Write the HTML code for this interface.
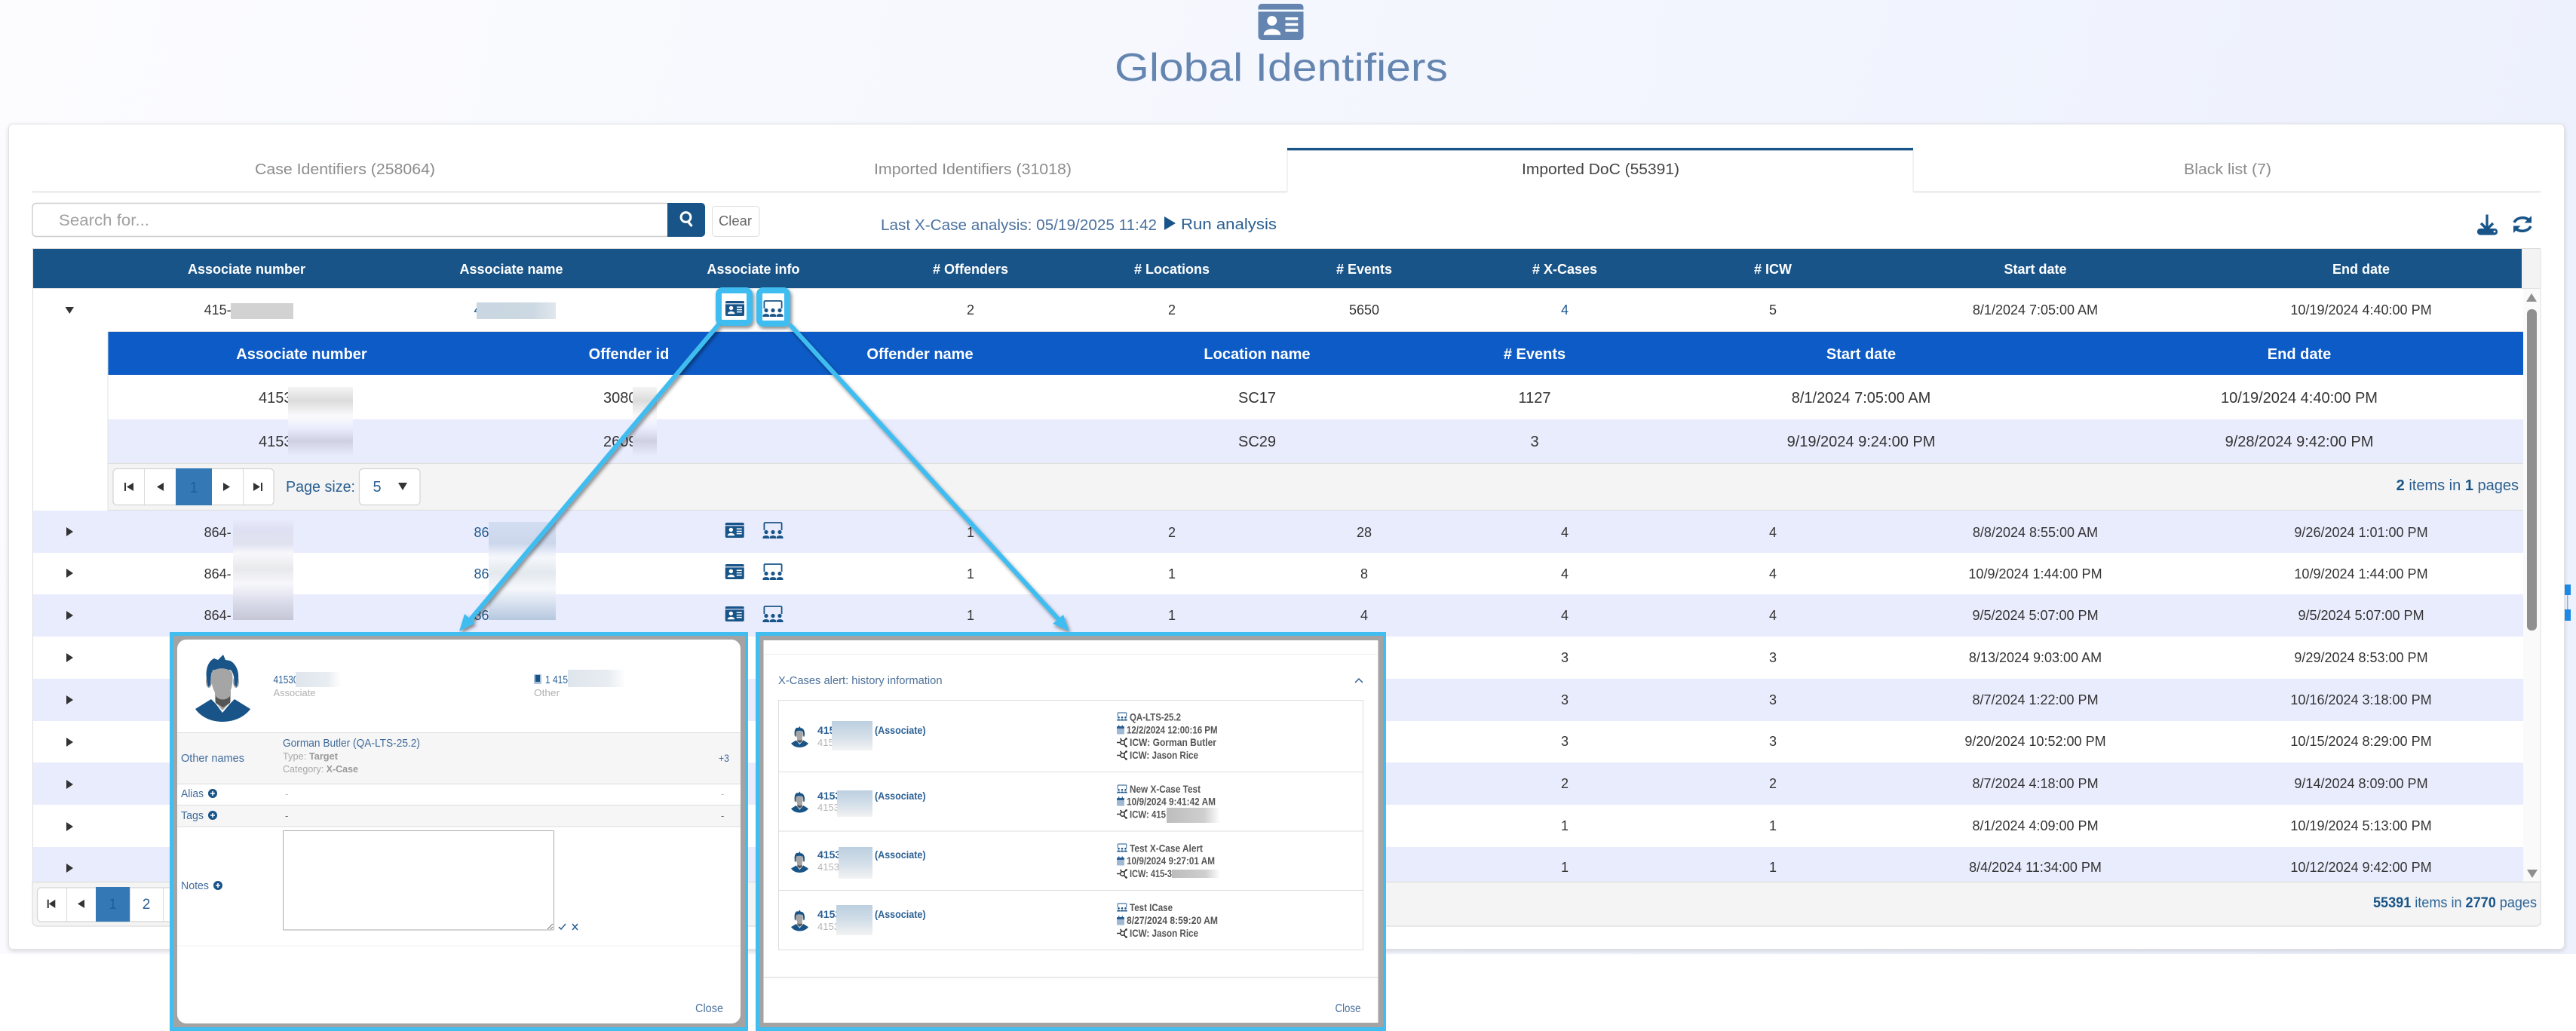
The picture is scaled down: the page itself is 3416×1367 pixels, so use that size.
<!DOCTYPE html>
<html lang="en">
<head>
<meta charset="utf-8">
<title>Global Identifiers</title>
<style>
html,body{margin:0;padding:0;background:#fff;width:3416px;height:1367px;overflow:hidden}
svg{display:block;font-family:"Liberation Sans",sans-serif}
.h{font-size:18px;font-weight:700;fill:#fff;text-anchor:middle}
.nh{font-size:20px;font-weight:700;fill:#fff;text-anchor:middle}
.d{font-size:18px;fill:#333;text-anchor:middle}
.n{font-size:20px;fill:#333;text-anchor:middle}
.l{font-size:18px;fill:#333}
.a{font-size:18px;fill:#1f5a90}
.tab{font-size:20px;fill:#8c8c8c}
.pb{font-size:15px;fill:#3f6a9a}
.ps{font-size:13px;fill:#a8a8a8}
.rt{font-size:13.5px;font-weight:700;fill:#555}
.nm{font-size:14px;font-weight:700;fill:#2a5f94}
.sub{font-size:13px;fill:#b5b5b5}
</style>
</head>
<body>
<svg xmlns="http://www.w3.org/2000/svg" width="3416" height="1367" viewBox="0 0 3416 1367">
<defs>
<linearGradient id="bg" x1="0" y1="0" x2="1" y2="0.1">
<stop offset="0" stop-color="#fcfcff"/><stop offset=".5" stop-color="#f5f7fe"/><stop offset="1" stop-color="#edf1fd"/>
</linearGradient>
<linearGradient id="b1" x1="0" y1="0" x2="0" y2="1">
<stop offset="0" stop-color="#e9ecfd"/><stop offset=".1" stop-color="#dfe1f2"/><stop offset=".25" stop-color="#e0e2f0"/><stop offset=".34" stop-color="#f8f8fb"/><stop offset=".5" stop-color="#e8e9eb"/><stop offset=".64" stop-color="#f7f7fb"/><stop offset=".85" stop-color="#d6d8e8"/><stop offset="1" stop-color="#c6c7d6"/>
</linearGradient>
<linearGradient id="b2" x1="0" y1="0" x2="0" y2="1">
<stop offset="0" stop-color="#d3ddf1"/><stop offset=".22" stop-color="#ccd7ec"/><stop offset=".36" stop-color="#f5f7fc"/><stop offset=".52" stop-color="#e3e9ee"/><stop offset=".68" stop-color="#f5f7fc"/><stop offset="1" stop-color="#b6c8df"/>
</linearGradient>
<linearGradient id="b3" x1="0" y1="0" x2="0" y2="1">
<stop offset="0" stop-color="#f4f4f4"/><stop offset=".2" stop-color="#dcdcdc"/><stop offset=".42" stop-color="#fafafc"/><stop offset=".6" stop-color="#e9ecfd"/><stop offset=".78" stop-color="#cfd1e2"/><stop offset="1" stop-color="#e9ecfd"/>
</linearGradient>
<linearGradient id="b4" x1="0" y1="0" x2="1" y2="0">
<stop offset="0" stop-color="#dfe5ec"/><stop offset=".7" stop-color="#e8edf2"/><stop offset="1" stop-color="#fff"/>
</linearGradient>
<linearGradient id="b5" x1="0" y1="0" x2="0" y2="1">
<stop offset="0" stop-color="#bccfe0"/><stop offset=".5" stop-color="#d2dee8"/><stop offset="1" stop-color="#f2f2f2"/>
</linearGradient>
<linearGradient id="b6" x1="0" y1="0" x2="1" y2="0">
<stop offset="0" stop-color="#bdbdbd"/><stop offset=".7" stop-color="#cfcfcf"/><stop offset="1" stop-color="#fff"/>
</linearGradient>
<linearGradient id="b7" x1="0" y1="0" x2="1" y2="0">
<stop offset="0" stop-color="#c9d7e3"/><stop offset=".7" stop-color="#ccd8e2"/><stop offset="1" stop-color="#e0e7ed"/>
</linearGradient>
<filter id="sh" x="-20%" y="-20%" width="140%" height="140%"><feDropShadow dx="2" dy="3" stdDeviation="2.5" flood-color="#000" flood-opacity=".45"/></filter>
<filter id="cs" x="-2%" y="-2%" width="104%" height="104%"><feDropShadow dx="0" dy="2" stdDeviation="3" flood-color="#000" flood-opacity=".14"/></filter>
<symbol id="card" viewBox="0 0 25 20">
<path d="M2 0h21a2 2 0 0 1 2 2v1.2H0V2a2 2 0 0 1 2-2z"/>
<path d="M0 4.4h25V18a2 2 0 0 1-2 2H2a2 2 0 0 1-2-2z"/>
<circle cx="7.6" cy="9.4" r="2.7" fill="#fff"/>
<path d="M3 17.2c0-4.4 9.4-4.4 9.4 0z" fill="#fff"/>
<path d="M15 7.5h7v1.5h-7zM15 10.7h7v1.5h-7zM15 13.9h7v1.5h-7z" fill="#fff"/>
</symbol>
<symbol id="kan" viewBox="0 0 28 22">
<path d="M2.400 11V2.200a1.200 1.200 0 0 1 1.200-1.200h20.800a1.200 1.200 0 0 1 1.200 1.200V11" fill="none" stroke="currentColor" stroke-width="1.800"/>
<circle cx="5" cy="13.500" r="2.600"/><circle cx="14" cy="13.500" r="2.600"/><circle cx="23" cy="13.500" r="2.600"/>
<path d="M.5 22v-1.500c0-3.200 8.600-3.200 8.600 0V22zM9.700 22v-1.500c0-3.200 8.600-3.200 8.600 0V22zM18.900 22v-1.500c0-3.200 8.600-3.200 8.600 0V22z"/>
</symbol>
<symbol id="av" viewBox="0 0 73 89">
<path d="M26 48v14l10 12 11-12V48z" fill="#a5a5a5"/>
<path d="M0 72l21-13 6 6 9 12 10-12 6-6 21 13c-7 10-21 17-37 17S7 82 0 72z" fill="#185488"/>
<path d="M27 55c5 6 14 6 19 0v9l-9 6-10-6z" fill="#555"/>
<ellipse cx="18" cy="36" rx="4" ry="8" fill="#a5a5a5"/><ellipse cx="54" cy="36" rx="4" ry="8" fill="#a5a5a5"/>
<path d="M15 32C13 18 18 8 25 5l5 2 7-7 3 7 6 1c8 4 12 14 11 24l-2 11-3-3c0-10-2-18-6-20-6 4-16 4-22 0-3 4-4 12-4 20l-3 3z" fill="#185488"/>
<path d="M21 25c3-9 25-9 28 0 2 13-2 32-13 32S20 38 21 25z" fill="#a5a5a5"/>
</symbol>
<symbol id="net" viewBox="0 0 16 14">
<circle cx="8" cy="7" r="3" fill="none" stroke="#333" stroke-width="1.6"/>
<path d="M0 7h5M10 5l3-3.500M10 9l3 3.500M7 4.500 5 1" stroke="#333" stroke-width="1.7" fill="none"/>
<circle cx="13.500" cy="1.600" r="1.400" fill="#333"/><circle cx="13.500" cy="12.400" r="1.400" fill="#333"/>
</symbol>
<symbol id="cal" viewBox="0 0 10 12">
<rect y="1.500" width="10" height="10.500" rx="1" fill="#9fb8d4"/>
<rect y="1.500" width="10" height="3" rx="1" fill="#2a6096"/>
<rect x="2" width="1.400" height="2.500" fill="#2a6096"/><rect x="6.600" width="1.400" height="2.500" fill="#2a6096"/>
</symbol>
</defs>

<!-- page background -->
<rect x="0" y="0" width="3416" height="1265" fill="url(#bg)"/>

<!-- header -->
<use href="#card" x="1668" y="5" width="61" height="48" fill="#6485b0" preserveAspectRatio="none"/>
<text x="1478" y="107" font-size="52" fill="#6485b0" textLength="442" lengthAdjust="spacingAndGlyphs">Global Identifiers</text>

<!-- card -->
<rect x="11.500" y="164.500" width="3389" height="1094" rx="6" fill="#fff" stroke="#e2e2e2" filter="url(#cs)"/>

<!-- tabs -->
<path d="M43 254.500H1707M2537 254.500H3369" stroke="#dedede" stroke-width="1.4"/>
<path d="M1707 199V254M2537 199V254" stroke="#e4e4e4" stroke-width="1"/>
<rect x="1707" y="196" width="830" height="3.400" fill="#185488"/>
<text class="tab" x="338" y="231" textLength="239" lengthAdjust="spacingAndGlyphs">Case Identifiers (258064)</text>
<text class="tab" x="1159" y="231" textLength="262" lengthAdjust="spacingAndGlyphs">Imported Identifiers (31018)</text>
<text class="tab" x="2018" y="231" style="fill:#444" textLength="209" lengthAdjust="spacingAndGlyphs">Imported DoC (55391)</text>
<text class="tab" x="2896" y="231" textLength="116" lengthAdjust="spacingAndGlyphs">Black list (7)</text>

<!-- search -->
<rect x="43" y="269.500" width="845" height="44" rx="5" fill="#fff" stroke="#ccc" stroke-width="1.4"/>
<text x="78" y="299" font-size="21" fill="#a0a0a0" textLength="120" lengthAdjust="spacingAndGlyphs">Search for...</text>
<path d="M885 269h45a5 5 0 0 1 5 5v35a5 5 0 0 1-5 5h-45z" fill="#185488"/>
<circle cx="909.500" cy="288" r="6.400" fill="none" stroke="#fff" stroke-width="3"/>
<path d="M912.500 294l5 6" stroke="#fff" stroke-width="3.200"/>
<rect x="944.500" y="273.500" width="62.500" height="40" rx="4" fill="#fff" stroke="#ddd"/>
<text x="953" y="299" font-size="18" fill="#666" textLength="44" lengthAdjust="spacingAndGlyphs">Clear</text>

<text x="1168" y="305" font-size="20" fill="#4c729f" textLength="366" lengthAdjust="spacingAndGlyphs">Last X-Case analysis: 05/19/2025 11:42</text>
<path d="M1544 287l15 9-15 9z" fill="#185488"/>
<text x="1566" y="304" font-size="20" fill="#2b5f92" textLength="127" lengthAdjust="spacingAndGlyphs">Run analysis</text>

<!-- download / refresh -->
<path d="M3298 284.500V303" stroke="#185488" stroke-width="3.200"/>
<path d="M3290 296l8 8 8-8" fill="none" stroke="#185488" stroke-width="3.400"/>
<rect x="3285" y="303" width="27" height="8.600" rx="4" fill="#185488"/>
<circle cx="3308" cy="307" r="1.400" fill="#fff"/>
<path d="M3334 295a12 10 0 0 1 20-3" fill="none" stroke="#185488" stroke-width="3.600"/>
<path d="M3357 286v9.500h-9.500z" fill="#185488"/>
<path d="M3356 300a12 10 0 0 1-20 3" fill="none" stroke="#185488" stroke-width="3.600"/>
<path d="M3333 309v-9.500h9.500z" fill="#185488"/>

<!-- grid frame -->
<rect x="43" y="329" width="3326" height="899" fill="#fff"/>
<rect x="3344" y="330" width="25" height="52" fill="#f3f3f3"/>
<rect x="3346" y="382" width="23" height="787" fill="#fafafa"/>
<rect x="43" y="330" width="3301" height="52" fill="#185488"/>
<path d="M43 329.500H3369" stroke="#dcdcdc"/>
<path d="M43 382.500H3369" stroke="#e2e2e2"/>

<!-- header row text -->
<text class="h" x="327" y="363">Associate number</text>
<text class="h" x="678" y="363">Associate name</text>
<text class="h" x="999" y="363">Associate info</text>
<text class="h" x="1287" y="363"># Offenders</text>
<text class="h" x="1554" y="363"># Locations</text>
<text class="h" x="1809" y="363"># Events</text>
<text class="h" x="2075" y="363"># X-Cases</text>
<text class="h" x="2351" y="363"># ICW</text>
<text class="h" x="2699" y="363">Start date</text>
<text class="h" x="3131" y="363">End date</text>

<!-- row 0 -->
<path d="M86.500 407h11.500l-5.750 9z" fill="#333"/>
<text class="l" x="270.600" y="417">415-</text>
<text class="a" x="628.500" y="417">4</text>
<rect x="306" y="402" width="83" height="21" fill="#d2d2d2"/>
<rect x="632" y="401" width="105" height="22" fill="url(#b7)"/>
<text class="d" x="1287" y="417">2</text>
<text class="d" x="1554" y="417">2</text>
<text class="d" x="1809" y="417">5650</text>
<text class="d" x="2075" y="417" style="fill:#1f5a90">4</text>
<text class="d" x="2351" y="417">5</text>
<text class="d" x="2699" y="417">8/1/2024 7:05:00 AM</text>
<text class="d" x="3131" y="417">10/19/2024 4:40:00 PM</text>
<path d="M43 439.500H143" stroke="#fff"/>
<path d="M143 439.500H3346" stroke="#e2e2e2"/>

<!-- nested grid -->
<rect x="143" y="440" width="3203" height="57" fill="#0d5bc6"/>
<rect x="143" y="497" width="3203" height="59" fill="#fff"/>
<rect x="143" y="556" width="3203" height="58" fill="#e9ecfd"/>
<rect x="143" y="614" width="3203" height="63" fill="#f4f4f4"/>
<path d="M143 614.500H3346M143 676.500H3346" stroke="#dedede" stroke-width="1.200"/>
<path d="M143 440V677" stroke="#e2e2e2"/>
<text class="nh" x="400" y="476">Associate number</text>
<text class="nh" x="834" y="476">Offender id</text>
<text class="nh" x="1220" y="476">Offender name</text>
<text class="nh" x="1667" y="476">Location name</text>
<text class="nh" x="2035" y="476"># Events</text>
<text class="nh" x="2468" y="476">Start date</text>
<text class="nh" x="3049" y="476">End date</text>

<text font-size="20" fill="#333" x="343" y="534">41530</text>
<text font-size="20" fill="#333" x="800" y="534">30800</text>
<text class="n" x="1667" y="534">SC17</text>
<text class="n" x="2035" y="534">1127</text>
<text class="n" x="2468" y="534">8/1/2024 7:05:00 AM</text>
<text class="n" x="3049" y="534">10/19/2024 4:40:00 PM</text>
<text font-size="20" fill="#333" x="343" y="592">41530</text>
<text font-size="20" fill="#333" x="800" y="592">26090</text>
<text class="n" x="1667" y="592">SC29</text>
<text class="n" x="2035" y="592">3</text>
<text class="n" x="2468" y="592">9/19/2024 9:24:00 PM</text>
<text class="n" x="3049" y="592">9/28/2024 9:42:00 PM</text>
<rect x="382" y="513" width="86" height="92" fill="url(#b3)"/>
<rect x="839" y="513" width="32" height="92" fill="url(#b3)"/>

<!-- nested pager -->
<rect x="150" y="621.500" width="213" height="48" rx="5" fill="#fff" stroke="#d4d4d4" stroke-width="1.200"/>
<path d="M191.500 622V669M322.500 622V669" stroke="#d9d9d9"/>
<rect x="233" y="621" width="48" height="49" fill="#3479b5"/>
<text x="257" y="653" font-size="20" fill="#1f5f9a" text-anchor="middle">1</text>
<path d="M165 640h2v11h-2zM177 640v11l-9-5.500zM217 640v11l-9-5.500zM296 640v11l9-5.500zM336 640v11l9-5.500zM346 640h2v11h-2z" fill="#333"/>
<text x="379" y="652" font-size="20" fill="#2b5f92" textLength="92" lengthAdjust="spacingAndGlyphs">Page size:</text>
<rect x="476.500" y="621.500" width="80.500" height="48" rx="5" fill="#fff" stroke="#d4d4d4" stroke-width="1.200"/>
<text x="500" y="652" font-size="20" fill="#2b5f92" text-anchor="middle">5</text>
<path d="M528 640h12l-6 10z" fill="#333"/>
<text x="3340" y="650" font-size="20" fill="#2b5f92" text-anchor="end"><tspan font-weight="700" fill="#185488">2</tspan> items in <tspan font-weight="700" fill="#185488">1</tspan> pages</text>

<!-- main rows -->
<rect x="43" y="677" width="3303" height="56" fill="#e9ecfd"/>
<rect x="43" y="733" width="3303" height="55" fill="#fff"/>
<rect x="43" y="788" width="3303" height="56" fill="#e9ecfd"/>
<rect x="43" y="844" width="3303" height="56" fill="#fff"/>
<rect x="43" y="900" width="3303" height="56" fill="#e9ecfd"/>
<rect x="43" y="956" width="3303" height="55" fill="#fff"/>
<rect x="43" y="1011" width="3303" height="56" fill="#e9ecfd"/>
<rect x="43" y="1067" width="3303" height="56" fill="#fff"/>
<rect x="43" y="1123" width="3303" height="46" fill="#e9ecfd"/>
<path d="M43.500 329V1224" stroke="#dedede"/>
<path d="M3369 330V1226" stroke="#e2e2e2"/>

<path d="M88 699l9 6-9 6zM88 754l9 6-9 6zM88 810l9 6-9 6zM88 866l9 6-9 6zM88 922l9 6-9 6zM88 978l9 6-9 6zM88 1034l9 6-9 6zM88 1090l9 6-9 6zM88 1145l9 6-9 6z" fill="#333"/>

<text class="l" x="270.600" y="712">864-</text>
<text class="l" x="270.600" y="767">864-</text>
<text class="l" x="270.600" y="822">864-</text>
<text class="a" x="628.500" y="712">86</text>
<text class="a" x="628.500" y="767">86</text>
<text class="a" x="628.500" y="822">86</text>
<rect x="309" y="688" width="80" height="134" fill="url(#b1)"/>
<rect x="648" y="692" width="89" height="130" fill="url(#b2)"/>

<use href="#card" x="961.500" y="693" width="25.500" height="20" fill="#185488"/>
<use href="#card" x="961.500" y="748" width="25.500" height="20" fill="#185488"/>
<use href="#card" x="961.500" y="804" width="25.500" height="20" fill="#185488"/>
<use href="#kan" x="1011" y="692" width="28" height="22" fill="#185488" color="#185488"/>
<use href="#kan" x="1011" y="747" width="28" height="22" fill="#185488" color="#185488"/>
<use href="#kan" x="1011" y="803" width="28" height="22" fill="#185488" color="#185488"/>

<!-- row data -->
<g class="rows">
<text class="d" x="1287" y="712">1</text><text class="d" x="1554" y="712">2</text><text class="d" x="1809" y="712">28</text><text class="d" x="2075" y="712">4</text><text class="d" x="2351" y="712">4</text><text class="d" x="2699" y="712">8/8/2024 8:55:00 AM</text><text class="d" x="3131" y="712">9/26/2024 1:01:00 PM</text>
<text class="d" x="1287" y="767">1</text><text class="d" x="1554" y="767">1</text><text class="d" x="1809" y="767">8</text><text class="d" x="2075" y="767">4</text><text class="d" x="2351" y="767">4</text><text class="d" x="2699" y="767">10/9/2024 1:44:00 PM</text><text class="d" x="3131" y="767">10/9/2024 1:44:00 PM</text>
<text class="d" x="1287" y="822">1</text><text class="d" x="1554" y="822">1</text><text class="d" x="1809" y="822">4</text><text class="d" x="2075" y="822">4</text><text class="d" x="2351" y="822">4</text><text class="d" x="2699" y="822">9/5/2024 5:07:00 PM</text><text class="d" x="3131" y="822">9/5/2024 5:07:00 PM</text>
<text class="d" x="2075" y="878">3</text><text class="d" x="2351" y="878">3</text><text class="d" x="2699" y="878">8/13/2024 9:03:00 AM</text><text class="d" x="3131" y="878">9/29/2024 8:53:00 PM</text>
<text class="d" x="2075" y="934">3</text><text class="d" x="2351" y="934">3</text><text class="d" x="2699" y="934">8/7/2024 1:22:00 PM</text><text class="d" x="3131" y="934">10/16/2024 3:18:00 PM</text>
<text class="d" x="2075" y="989">3</text><text class="d" x="2351" y="989">3</text><text class="d" x="2699" y="989">9/20/2024 10:52:00 PM</text><text class="d" x="3131" y="989">10/15/2024 8:29:00 PM</text>
<text class="d" x="2075" y="1045">2</text><text class="d" x="2351" y="1045">2</text><text class="d" x="2699" y="1045">8/7/2024 4:18:00 PM</text><text class="d" x="3131" y="1045">9/14/2024 8:09:00 PM</text>
<text class="d" x="2075" y="1101">1</text><text class="d" x="2351" y="1101">1</text><text class="d" x="2699" y="1101">8/1/2024 4:09:00 PM</text><text class="d" x="3131" y="1101">10/19/2024 5:13:00 PM</text>
<text class="d" x="2075" y="1156">1</text><text class="d" x="2351" y="1156">1</text><text class="d" x="2699" y="1156">8/4/2024 11:34:00 PM</text><text class="d" x="3131" y="1156">10/12/2024 9:42:00 PM</text>
</g>

<!-- footer -->
<path d="M43 1169.500H3369V1222a6 6 0 0 1-6 6H49a6 6 0 0 1-6-6z" fill="#f4f4f4" stroke="#dcdcdc" stroke-width="1.200"/>
<rect x="49.500" y="1177" width="210" height="45" rx="5" fill="#fff" stroke="#d4d4d4" stroke-width="1.200"/>
<path d="M88.500 1177V1222M172.500 1177V1222M216.500 1177V1222" stroke="#d9d9d9"/>
<rect x="127" y="1176" width="45" height="46" fill="#3479b5"/>
<text x="149.500" y="1205" font-size="19" fill="#1f5f9a" text-anchor="middle">1</text>
<text x="194" y="1205" font-size="19" fill="#2b5f92" text-anchor="middle">2</text>
<path d="M62.700 1192.700h2v11.300h-2zM73.300 1192.700v11.300l-8.500-5.650zM112 1192.700v11.300l-9-5.650z" fill="#333"/>
<text x="3364" y="1203" font-size="19" fill="#2b6499" text-anchor="end" textLength="217" lengthAdjust="spacingAndGlyphs"><tspan font-weight="700" fill="#185488">55391</tspan> items in <tspan font-weight="700" fill="#185488">2770</tspan> pages</text>

<!-- scrollbar -->
<path d="M3357 389l7 11h-14z" fill="#8f8f8f"/>
<rect x="3351" y="410" width="13" height="426" rx="6" fill="#8f8f8f"/>
<path d="M3351 1153h14l-7 11z" fill="#8f8f8f"/>

<!-- right-edge marks -->
<rect x="3401" y="775" width="8" height="14" fill="#1e88e5"/>
<rect x="3401" y="808" width="8" height="15" fill="#1e88e5"/>
<rect x="3404" y="789" width="1.500" height="19" fill="#7db8ee"/>

<!-- callouts -->
<g filter="url(#sh)">
<rect x="953" y="385" width="41" height="43" rx="5" fill="#fff" stroke="#41bdf0" stroke-width="8"/>
<rect x="1007" y="385" width="37" height="44" rx="5" fill="#fff" stroke="#41bdf0" stroke-width="8"/>
</g>
<use href="#card" x="962" y="399" width="25" height="20" fill="#185488"/>
<use href="#kan" x="1011" y="398" width="28" height="22" fill="#185488" color="#185488"/>

<!-- connectors -->
<g filter="url(#sh)" fill="#41bdf0" stroke="none">
<path d="M953 430L619 827" stroke="#41bdf0" stroke-width="6" fill="none"/>
<path d="M609 837l7-23 14 12z"/>
<path d="M1047 430L1408 826" stroke="#41bdf0" stroke-width="6" fill="none"/>
<path d="M1418 837l-22-10 14-12z"/>
</g>

<!-- popup 1 -->
<rect x="225" y="838" width="767" height="529" fill="#41bdf0"/>
<rect x="230" y="843" width="758" height="519" fill="#a3a3a3"/>
<rect x="235" y="848" width="747" height="509" rx="12" fill="#fff"/>
<use href="#av" x="259" y="868" width="73" height="89"/>
<text x="362.500" y="906" font-size="14.500" fill="#2a5f94" textLength="33" lengthAdjust="spacingAndGlyphs">41530</text>
<rect x="392" y="891" width="60" height="20" fill="url(#b4)"/>
<text x="362.500" y="923" font-size="13" fill="#b0b0b0" textLength="56" lengthAdjust="spacingAndGlyphs">Associate</text>
<rect x="708" y="894" width="10" height="13" rx="1.500" fill="#a9bfd6"/><rect x="710" y="895" width="6" height="9" fill="#185488"/>
<text x="723" y="906" font-size="14.500" fill="#2a5f94" textLength="30" lengthAdjust="spacingAndGlyphs">1 415</text>
<rect x="753" y="888" width="77" height="23" fill="url(#b4)"/>
<text x="708" y="923" font-size="13" fill="#b0b0b0" textLength="34" lengthAdjust="spacingAndGlyphs">Other</text>

<path d="M235 971.500H982" stroke="#ddd"/>
<rect x="235" y="972" width="747" height="67" fill="#f6f6f6"/>
<path d="M235 1039.500H982" stroke="#ddd"/>
<path d="M235 1067.500H982" stroke="#ddd"/>
<rect x="235" y="1068" width="747" height="28" fill="#f6f6f6"/>
<path d="M235 1096H982" stroke="#ddd"/>
<path d="M235 1254H982" stroke="#f1f1f1"/>

<text class="pb" x="240" y="1010" textLength="84" lengthAdjust="spacingAndGlyphs">Other names</text>
<text class="pb" x="375" y="990" textLength="182" lengthAdjust="spacingAndGlyphs">Gorman Butler (QA-LTS-25.2)</text>
<text class="ps" x="375" y="1007" textLength="73" lengthAdjust="spacingAndGlyphs">Type: <tspan font-weight="700" fill="#999">Target</tspan></text>
<text class="ps" x="375" y="1024" textLength="100" lengthAdjust="spacingAndGlyphs">Category: <tspan font-weight="700" fill="#999">X-Case</tspan></text>
<text class="pb" x="953" y="1010" style="font-size:14px" textLength="14" lengthAdjust="spacingAndGlyphs">+3</text>

<text class="pb" x="240" y="1057" textLength="30" lengthAdjust="spacingAndGlyphs">Alias</text>
<circle cx="282" cy="1052" r="6" fill="#185488"/><path d="M279 1052h6M282 1049v6" stroke="#fff" stroke-width="1.600"/>
<text x="378" y="1057" font-size="13" fill="#bbb">-</text><text x="956" y="1057" font-size="13" fill="#bbb">-</text>
<text class="pb" x="240" y="1086" textLength="30" lengthAdjust="spacingAndGlyphs">Tags</text>
<circle cx="282" cy="1081" r="6" fill="#185488"/><path d="M279 1081h6M282 1078v6" stroke="#fff" stroke-width="1.600"/>
<text x="378" y="1086" font-size="13" fill="#666">-</text><text x="956" y="1086" font-size="13" fill="#666">-</text>

<text class="pb" x="240" y="1179" textLength="37" lengthAdjust="spacingAndGlyphs">Notes</text>
<circle cx="289" cy="1174" r="6" fill="#185488"/><path d="M286 1174h6M289 1171v6" stroke="#fff" stroke-width="1.600"/>
<rect x="375.500" y="1101.500" width="359" height="131.500" rx="1" fill="#fff" stroke="#aaa"/>
<path d="M726 1232l7-7M730 1232l3-3" stroke="#777"/>
<path d="M741 1229l3 3 6-7" fill="none" stroke="#2a5f94" stroke-width="1.500"/>
<path d="M759 1225l7 8M766 1225l-7 8" stroke="#2a5f94" stroke-width="1.500"/>
<text x="922" y="1342" font-size="15.500" fill="#4c729f" textLength="37" lengthAdjust="spacingAndGlyphs">Close</text>

<!-- popup 2 -->
<rect x="1002" y="838" width="836" height="529" fill="#41bdf0"/>
<rect x="1007" y="843" width="827" height="519" fill="#a3a3a3"/>
<rect x="1012.500" y="849" width="815" height="507" fill="#fff"/>
<path d="M1013 867.500H1827" stroke="#eee"/>
<text x="1032" y="907" font-size="15" fill="#4c7099" textLength="217.500" lengthAdjust="spacingAndGlyphs">X-Cases alert: history information</text>
<path d="M1797 905l5-5 5 5" fill="none" stroke="#2a5f94" stroke-width="1.500"/>
<rect x="1032.500" y="928.500" width="775" height="331" fill="#fff" stroke="#ddd"/>
<path d="M1033 1023.500H1808M1033 1102H1808M1033 1180.500H1808" stroke="#ddd"/>
<path d="M1013 1296H1827" stroke="#e2e2e2" stroke-width="1.500"/>

<use href="#av" x="1049" y="963" width="23" height="28"/>
<use href="#av" x="1049" y="1049.500" width="23" height="28"/>
<use href="#av" x="1049" y="1129" width="23" height="28"/>
<use href="#av" x="1049" y="1206.500" width="23" height="28"/>

<text class="nm" x="1084" y="973">4153</text><text class="sub" x="1084" y="989">41530</text>
<text class="nm" x="1084" y="1060">4153</text><text class="sub" x="1084" y="1075">41530</text>
<text class="nm" x="1084" y="1138">4153</text><text class="sub" x="1084" y="1154">41530</text>
<text class="nm" x="1084" y="1217">4153</text><text class="sub" x="1084" y="1233">41530</text>
<rect x="1103" y="956" width="54" height="39" fill="url(#b5)"/>
<rect x="1110" y="1048" width="47" height="35" fill="url(#b5)"/>
<rect x="1112" y="1123" width="45" height="42" fill="url(#b5)"/>
<rect x="1109" y="1200" width="48" height="40" fill="url(#b5)"/>
<text class="nm" x="1160" y="973" textLength="67.500" lengthAdjust="spacingAndGlyphs">(Associate)</text>
<text class="nm" x="1160" y="1060" textLength="67.500" lengthAdjust="spacingAndGlyphs">(Associate)</text>
<text class="nm" x="1160" y="1138" textLength="67.500" lengthAdjust="spacingAndGlyphs">(Associate)</text>
<text class="nm" x="1160" y="1217" textLength="67.500" lengthAdjust="spacingAndGlyphs">(Associate)</text>

<use href="#kan" x="1481" y="944" width="14" height="12" fill="#185488" color="#185488"/>
<text class="rt" x="1498" y="955.500" textLength="68" lengthAdjust="spacingAndGlyphs">QA-LTS-25.2</text>
<use href="#cal" x="1481" y="961" width="10" height="13"/>
<text class="rt" x="1494" y="972.500" textLength="120.500" lengthAdjust="spacingAndGlyphs">12/2/2024 12:00:16 PM</text>
<use href="#net" x="1481" y="978" width="15" height="13"/>
<text class="rt" x="1498" y="989" textLength="115" lengthAdjust="spacingAndGlyphs">ICW: Gorman Butler</text>
<use href="#net" x="1481" y="995" width="15" height="13"/>
<text class="rt" x="1498" y="1006" textLength="91" lengthAdjust="spacingAndGlyphs">ICW: Jason Rice</text>

<use href="#kan" x="1481" y="1040" width="14" height="12" fill="#185488" color="#185488"/>
<text class="rt" x="1498" y="1051" textLength="94" lengthAdjust="spacingAndGlyphs">New X-Case Test</text>
<use href="#cal" x="1481" y="1056" width="10" height="13"/>
<text class="rt" x="1494" y="1067.500" textLength="118" lengthAdjust="spacingAndGlyphs">10/9/2024 9:41:42 AM</text>
<use href="#net" x="1481" y="1073" width="15" height="13"/>
<text class="rt" x="1498" y="1084.500" textLength="48" lengthAdjust="spacingAndGlyphs">ICW: 415</text>
<rect x="1547" y="1071" width="71" height="20" fill="url(#b6)"/>

<use href="#kan" x="1481" y="1118" width="14" height="12" fill="#185488" color="#185488"/>
<text class="rt" x="1498" y="1129.500" textLength="97" lengthAdjust="spacingAndGlyphs">Test X-Case Alert</text>
<use href="#cal" x="1481" y="1135" width="10" height="13"/>
<text class="rt" x="1494" y="1146" textLength="117" lengthAdjust="spacingAndGlyphs">10/9/2024 9:27:01 AM</text>
<use href="#net" x="1481" y="1152" width="15" height="13"/>
<text class="rt" x="1498" y="1163" textLength="56" lengthAdjust="spacingAndGlyphs">ICW: 415-3</text>
<rect x="1554" y="1153" width="64" height="11" fill="url(#b6)"/>

<use href="#kan" x="1481" y="1197" width="14" height="12" fill="#185488" color="#185488"/>
<text class="rt" x="1498" y="1208" textLength="57" lengthAdjust="spacingAndGlyphs">Test ICase</text>
<use href="#cal" x="1481" y="1214" width="10" height="13"/>
<text class="rt" x="1494" y="1225" textLength="121" lengthAdjust="spacingAndGlyphs">8/27/2024 8:59:20 AM</text>
<use href="#net" x="1481" y="1231" width="15" height="13"/>
<text class="rt" x="1498" y="1242" textLength="91" lengthAdjust="spacingAndGlyphs">ICW: Jason Rice</text>

<text x="1770.500" y="1342" font-size="15.500" fill="#4c729f" textLength="34" lengthAdjust="spacingAndGlyphs">Close</text>
</svg>
</body>
</html>
